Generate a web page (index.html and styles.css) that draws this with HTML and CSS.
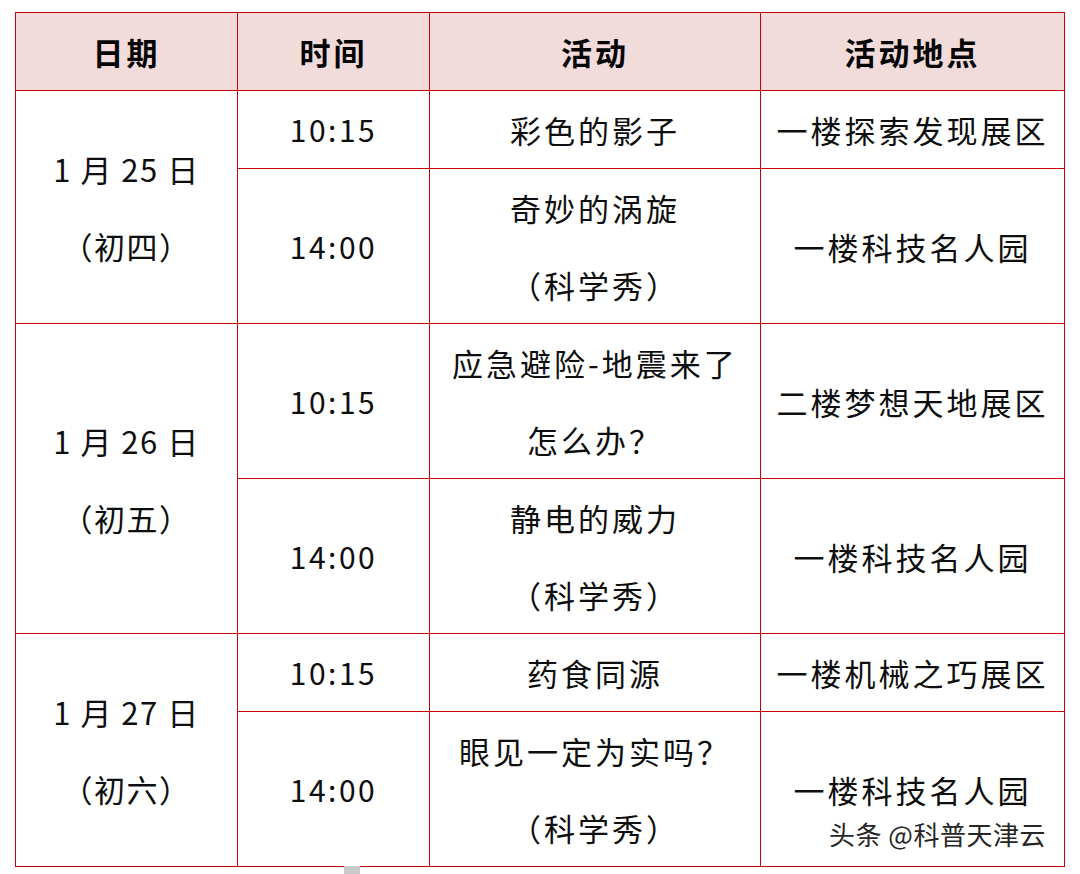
FILE: index.html
```html
<!DOCTYPE html>
<html lang="zh-CN">
<head>
<meta charset="utf-8">
<title>活动安排</title>
<link rel="stylesheet" href="styles.css">
</head>
<body>
<div class="page">
  <table class="schedule">
    <colgroup>
      <col class="c-date">
      <col class="c-time">
      <col class="c-act">
      <col class="c-place">
    </colgroup>
    <thead>
      <tr>
        <th>日期</th>
        <th>时间</th>
        <th>活动</th>
        <th>活动地点</th>
      </tr>
    </thead>
    <tbody>
      <tr>
        <td class="date" rowspan="2">1 月 25 日<br>（初四）</td>
        <td class="num">10:15</td>
        <td>彩色的影子</td>
        <td>一楼探索发现展区</td>
      </tr>
      <tr>
        <td class="num">14:00</td>
        <td>奇妙的涡旋<br>（科学秀）</td>
        <td>一楼科技名人园</td>
      </tr>
      <tr>
        <td class="date" rowspan="2">1 月 26 日<br>（初五）</td>
        <td class="num">10:15</td>
        <td>应急避险-地震来了<br>怎么办？</td>
        <td>二楼梦想天地展区</td>
      </tr>
      <tr>
        <td class="num">14:00</td>
        <td>静电的威力<br>（科学秀）</td>
        <td>一楼科技名人园</td>
      </tr>
      <tr>
        <td class="date" rowspan="2">1 月 27 日<br>（初六）</td>
        <td class="num">10:15</td>
        <td>药食同源</td>
        <td>一楼机械之巧展区</td>
      </tr>
      <tr>
        <td class="num">14:00</td>
        <td>眼见一定为实吗？<br>（科学秀）</td>
        <td>一楼科技名人园</td>
      </tr>
    </tbody>
  </table>
  <div class="watermark">头条 @科普天津云</div>
  <div class="stub"></div>
</div>
</body>
</html>
```

FILE: styles.css
```css
html, body {
  margin: 0;
  padding: 0;
  background: #ffffff;
}

.page {
  position: relative;
  width: 1080px;
  height: 874px;
  overflow: hidden;
  padding: 12px 0 0 15px;
  box-sizing: border-box;
  font-family: "Noto Sans CJK SC", "Noto Sans", sans-serif;
  color: #0e0e0e;
}

.schedule {
  width: 1049px;
  table-layout: fixed;
  border-collapse: collapse;
}

.c-date { width: 222px; }
.c-time { width: 192px; }
.c-act { width: 331px; }
.c-place { width: 304px; }

.schedule th,
.schedule td {
  border: 1px solid #c80008;
  padding: 0;
  text-align: center;
  vertical-align: middle;
  font-size: 31px;
  line-height: 77px;
  letter-spacing: 3px;
  white-space: nowrap;
}

.schedule th {
  background: #f2dcdb;
  font-weight: 700;
  color: #050505;
}

.schedule td {
  font-weight: 400;
}

.schedule td.num {
  font-size: 30px;
  letter-spacing: 2.5px;
}

.schedule td.date {
  letter-spacing: 1.5px;
}

.watermark {
  position: absolute;
  left: 829px;
  top: 815px;
  font-size: 26px;
  line-height: 38px;
  color: #262626;
  letter-spacing: 0.5px;
  text-shadow: 0 0 2px #ffffff, 0 0 2px #ffffff, 1px 1px 1px #ffffff;
}

.stub {
  position: absolute;
  left: 344px;
  top: 866px;
  width: 16px;
  height: 8px;
  background: #c9c9c9;
}
```
